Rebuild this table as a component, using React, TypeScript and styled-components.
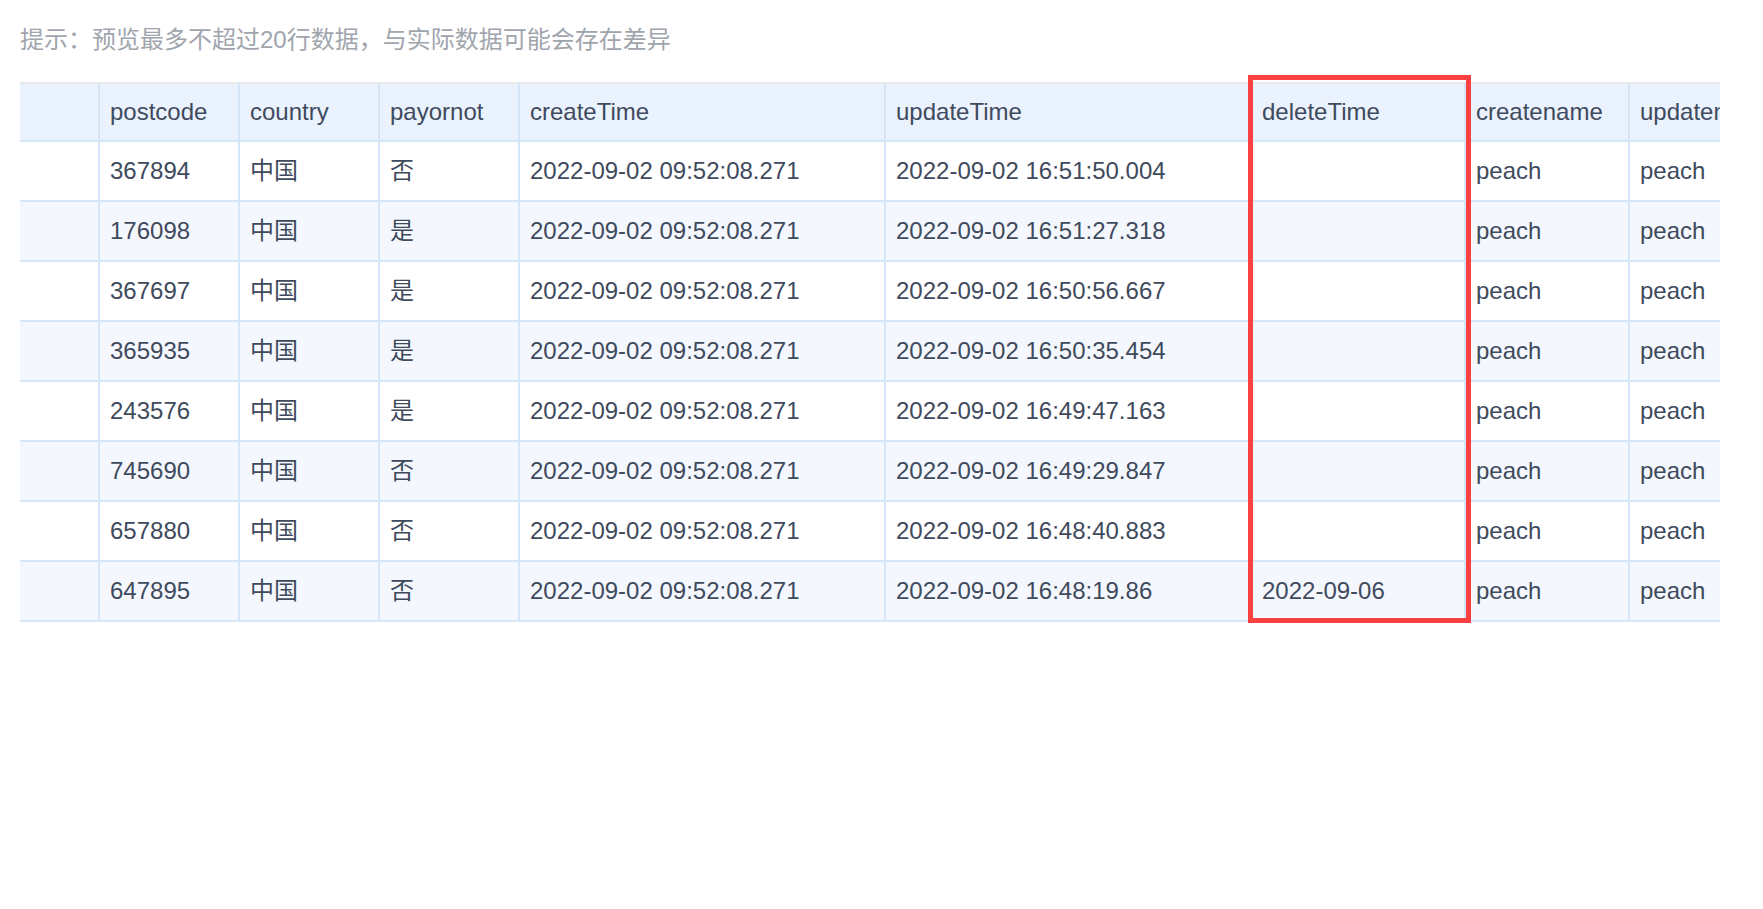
import styled, { createGlobalStyle } from "styled-components";

const GlobalStyle = createGlobalStyle`
  body {
    margin: 0;
    background: #ffffff;
    font-family: "Liberation Sans", "Noto Sans CJK SC", sans-serif;
  }
`;

const Page = styled.div`
  padding: 24px 20px;
  width: 1763px;
  height: 909px;
  box-sizing: border-box;
`;

const Tip = styled.div`
  font-size: 24px;
  line-height: 32px;
  color: #a0a5ad;
  margin-bottom: 26px;
`;

const TableWrap = styled.div`
  position: relative;
  width: 1700px;
`;

const Scroller = styled.div`
  width: 100%;
  overflow: hidden;
`;

const Table = styled.table`
  table-layout: fixed;
  border-collapse: separate;
  border-spacing: 0;
  width: 1770px;
  font-size: 24px;
  color: #3f4a5d;
`;

const Col = styled.col<{ $w: number }>`
  width: ${(p) => p.$w}px;
`;

const Th = styled.th`
  background: #eaf2fd;
  border-top: 2px solid #e6e8eb;
  border-bottom: 2px solid #d6e6f9;
  border-left: 2px solid #d6e6f9;
  padding: 0 10px;
  line-height: 56px;
  font-weight: normal;
  text-align: left;
  white-space: nowrap;
  overflow: hidden;
  box-sizing: border-box;

  &:first-child {
    border-left: none;
  }
`;

const Row = styled.tr<{ $even: boolean }>`
  background: ${(p) => (p.$even ? "#f4f8fe" : "#ffffff")};
`;

const Td = styled.td`
  border-bottom: 2px solid #d6e6f9;
  border-left: 2px solid #d6e6f9;
  padding: 0 10px;
  line-height: 58px;
  white-space: nowrap;
  overflow: hidden;
  box-sizing: border-box;

  &:first-child {
    border-left: none;
  }
`;

// annotation frame drawn over the deleteTime column
const Highlight = styled.div`
  position: absolute;
  left: 1228px;
  top: -7px;
  width: 223px;
  height: 548px;
  border: 5px solid #f94141;
  box-sizing: border-box;
  pointer-events: none;
`;

const widths = [78, 140, 140, 140, 366, 366, 214, 164, 162];
const headers = ["", "postcode", "country", "payornot", "createTime", "updateTime", "deleteTime", "createname", "updatename"];

const rows = [
  ["367894", "否", "16:51:50.004", ""],
  ["176098", "是", "16:51:27.318", ""],
  ["367697", "是", "16:50:56.667", ""],
  ["365935", "是", "16:50:35.454", ""],
  ["243576", "是", "16:49:47.163", ""],
  ["745690", "否", "16:49:29.847", ""],
  ["657880", "否", "16:48:40.883", ""],
  ["647895", "否", "16:48:19.86", "2022-09-06"],
];

const App = () => {
  return (
    <Page>
      <GlobalStyle />
      <Tip>提示：预览最多不超过20行数据，与实际数据可能会存在差异</Tip>
      <TableWrap>
        <Scroller>
          <Table>
            <colgroup>
              {widths.map((w, i) => <Col key={i} $w={w} />)}
            </colgroup>
            <thead>
              <tr>
                {headers.map((h, i) => <Th key={i}>{h}</Th>)}
              </tr>
            </thead>
            <tbody>
              {rows.map((r, i) => (
                <Row key={r[0]} $even={i % 2 === 1}>
                  <Td></Td>
                  <Td>{r[0]}</Td>
                  <Td>中国</Td>
                  <Td>{r[1]}</Td>
                  <Td>2022-09-02 09:52:08.271</Td>
                  <Td>2022-09-02 {r[2]}</Td>
                  <Td>{r[3]}</Td>
                  <Td>peach</Td>
                  <Td>peach</Td>
                </Row>
              ))}
            </tbody>
          </Table>
        </Scroller>
        <Highlight />
      </TableWrap>
    </Page>
  );
};

export default App;
